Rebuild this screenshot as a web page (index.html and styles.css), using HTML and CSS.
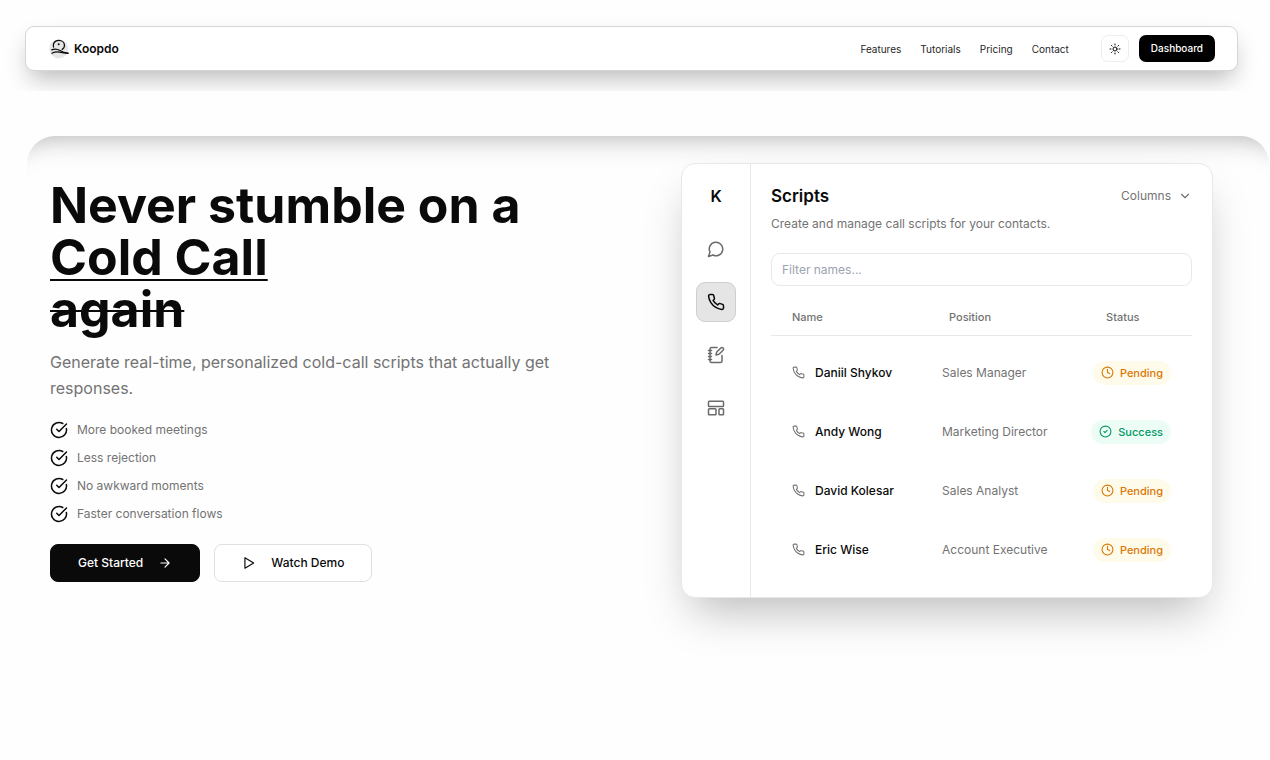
FILE: index.html
```html
<!DOCTYPE html>
<html lang="en">
<head>
<meta charset="utf-8">
<meta name="viewport" content="width=device-width, initial-scale=1">
<title>Koopdo</title>
<link rel="stylesheet" href="styles.css">
</head>
<body>
<svg class="sprite" aria-hidden="true">
  <symbol id="phone" viewBox="0 0 24 24"><path d="M22 16.920v3a2 2 0 0 1-2.180 2 19.790 19.790 0 0 1-8.630-3.070 19.500 19.500 0 0 1-6-6 19.790 19.790 0 0 1-3.070-8.670A2 2 0 0 1 4.110 2h3a2 2 0 0 1 2 1.720 12.840 12.840 0 0 0 .7 2.810 2 2 0 0 1-.45 2.110L8.090 9.910a16 16 0 0 0 6 6l1.270-1.270a2 2 0 0 1 2.110-.45 12.840 12.840 0 0 0 2.810.7A2 2 0 0 1 22 16.920z"/></symbol>
  <symbol id="check" viewBox="0 0 24 24"><path d="M21.801 10A10 10 0 1 1 17 3.335"/><path d="m9 11 3 3L22 4"/></symbol>
  <symbol id="clock" viewBox="0 0 24 24"><circle cx="12" cy="12" r="10"/><path d="M12 6v6l4 2"/></symbol>
  <symbol id="done" viewBox="0 0 24 24"><circle cx="12" cy="12" r="10"/><path d="m9 12 2 2 4-4"/></symbol>
</svg>

<header class="site-header">
  <nav class="navbar" aria-label="Main">
    <a class="brand" href="#">
      <svg class="brand-mark" viewBox="0 0 20 20" aria-hidden="true">
        <circle class="brand-disc" cx="9.700" cy="9.700" r="9.500"/>
        <path d="M4.500 8C3.400 4 6.200 1.400 9.700 1.400c3.500 0 5.800 2.300 5.800 5 0 1.700-.9 3.100-2.300 4"/>
        <path d="M2.700 10.800c3-1.300 5.600-.9 8.300.7 2.600 1.600 4.900 2.300 8 2.700"/>
        <path d="M3 14.200c2.800-1.500 5-1.700 7.600-1.100 2.200.5 5 1 8.400 1.300"/>
        <circle class="brand-eye" cx="9.700" cy="5.300" r="1"/>
      </svg>
      Koopdo
    </a>
    <div class="nav-links">
      <a href="#">Features</a>
      <a href="#">Tutorials</a>
      <a href="#">Pricing</a>
      <a href="#">Contact</a>
    </div>
    <button class="theme-toggle" type="button" aria-label="Toggle theme">
      <svg class="icon icon-12" viewBox="0 0 24 24"><circle cx="12" cy="12" r="4"/><path d="M12 2v2M12 20v2M4.930 4.930l1.410 1.410M17.660 17.660l1.410 1.410M2 12h2M20 12h2M6.340 17.660l-1.410 1.410M19.070 4.930l-1.410 1.410"/></svg>
    </button>
    <a class="dashboard" href="#">Dashboard</a>
  </nav>
</header>

<main class="hero">
  <section class="pitch">
    <h1>Never stumble on a<br><span class="underlined">Cold Call</span><br><s>again</s></h1>
    <p class="lead">Generate real-time, personalized cold-call scripts that actually get responses.</p>
    <ul class="benefits">
      <li><svg class="icon icon-18"><use href="#check"/></svg>More booked meetings</li>
      <li><svg class="icon icon-18"><use href="#check"/></svg>Less rejection</li>
      <li><svg class="icon icon-18"><use href="#check"/></svg>No awkward moments</li>
      <li><svg class="icon icon-18"><use href="#check"/></svg>Faster conversation flows</li>
    </ul>
    <div class="actions">
      <button class="btn btn-dark" type="button">Get Started
        <svg class="icon icon-14" viewBox="0 0 24 24"><path d="M5 12h14M12 5l7 7-7 7"/></svg>
      </button>
      <button class="btn btn-light" type="button">
        <svg class="icon icon-14" viewBox="0 0 24 24"><path d="M5 3l15 9-15 9z"/></svg>
        Watch Demo
      </button>
    </div>
  </section>

  <section class="app" aria-label="Scripts preview">
    <aside class="rail">
      <span class="rail-logo">K</span>
      <button class="rail-item" type="button" aria-label="Chat"><svg class="icon icon-18" viewBox="0 0 24 24"><path d="M7.900 20A9 9 0 1 0 4 16.100L2 22Z"/></svg></button>
      <button class="rail-item active" type="button" aria-label="Calls"><svg class="icon icon-18"><use href="#phone"/></svg></button>
      <button class="rail-item" type="button" aria-label="Notes"><svg class="icon icon-18" viewBox="0 0 24 24"><path d="M13.400 2H6a2 2 0 0 0-2 2v16a2 2 0 0 0 2 2h12a2 2 0 0 0 2-2v-7.400"/><path d="M2 6h4M2 10h4M2 14h4M2 18h4"/><path d="M21.378 5.626a1 1 0 1 0-3.004-3.004l-5.010 5.012a2 2 0 0 0-.506.854l-.837 2.870a.5.5 0 0 0 .62.620l2.870-.837a2 2 0 0 0 .854-.506z"/></svg></button>
      <button class="rail-item" type="button" aria-label="Templates"><svg class="icon icon-18" viewBox="0 0 24 24"><rect x="2" y="3" width="20" height="7" rx="1"/><rect x="2" y="13" width="10" height="8" rx="1"/><rect x="16" y="13" width="6" height="8" rx="1"/></svg></button>
    </aside>
    <div class="panel">
      <div class="panel-head">
        <h2>Scripts</h2>
        <button class="columns" type="button">Columns
          <svg class="icon icon-14" viewBox="0 0 24 24"><path d="m6 9 6 6 6-6"/></svg>
        </button>
      </div>
      <p class="panel-text">Create and manage call scripts for your contacts.</p>
      <input class="filter" type="text" placeholder="Filter names..." aria-label="Filter names">
      <table class="scripts">
        <thead>
          <tr><th class="col-wide" scope="col">Name</th><th class="col-wide" scope="col">Position</th><th scope="col">Status</th></tr>
        </thead>
        <tbody>
          <tr>
            <td><span class="person"><svg class="icon icon-13"><use href="#phone"/></svg>Daniil Shykov</span></td>
            <td>Sales Manager</td>
            <td><span class="badge pending"><svg class="icon icon-13"><use href="#clock"/></svg>Pending</span></td>
          </tr>
          <tr>
            <td><span class="person"><svg class="icon icon-13"><use href="#phone"/></svg>Andy Wong</span></td>
            <td>Marketing Director</td>
            <td><span class="badge success"><svg class="icon icon-13"><use href="#done"/></svg>Success</span></td>
          </tr>
          <tr>
            <td><span class="person"><svg class="icon icon-13"><use href="#phone"/></svg>David Kolesar</span></td>
            <td>Sales Analyst</td>
            <td><span class="badge pending"><svg class="icon icon-13"><use href="#clock"/></svg>Pending</span></td>
          </tr>
          <tr>
            <td><span class="person"><svg class="icon icon-13"><use href="#phone"/></svg>Eric Wise</span></td>
            <td>Account Executive</td>
            <td><span class="badge pending"><svg class="icon icon-13"><use href="#clock"/></svg>Pending</span></td>
          </tr>
        </tbody>
      </table>
    </div>
  </section>
</main>
</body>
</html>
```

FILE: styles.css
```css
*, *::before, *::after { box-sizing: border-box; }

body {
  margin: 0;
  background: #fefefe;
  color: #0a0a0a;
  font-family: Inter, "Liberation Sans", sans-serif;
  font-size: 12px;
  line-height: 20px;
}

h1, h2, p, ul { margin: 0; padding: 0; }
a { color: inherit; text-decoration: none; }
button, input { font: inherit; color: inherit; }
button { background: none; border: 0; padding: 0; cursor: pointer; }

.sprite { display: none; }

.icon {
  flex: none;
  fill: none;
  stroke: currentColor;
  stroke-width: 2;
  stroke-linecap: round;
  stroke-linejoin: round;
}
.icon-12 { width: 12px; height: 12px; }
.icon-13 { width: 13px; height: 13px; }
.icon-14 { width: 14px; height: 14px; }
.icon-18 { width: 18px; height: 18px; }

/* Header */
.site-header {
  padding: 26px 32px 20px 25px;
  overflow: hidden;
}
.navbar {
  display: flex;
  align-items: center;
  padding: 8px 22px 8px 23px;
  background: #fff;
  border: 1px solid #d6d6d6;
  border-radius: 9px;
  box-shadow: 0 12px 24px -5px rgba(0, 0, 0, .28);
}
.brand {
  display: flex;
  align-items: center;
  gap: 5px;
  margin-right: auto;
  font-weight: 600;
}
.brand-mark {
  width: 20px;
  height: 20px;
  fill: none;
  stroke: #0a0a0a;
  stroke-width: 1.3;
  stroke-linecap: round;
}
.brand-disc { fill: #e6e6e6; stroke: none; }
.brand-eye { fill: #0a0a0a; stroke: none; }
.nav-links {
  display: flex;
  gap: 19px;
  margin-right: 32px;
  color: #262626;
  font-size: 10px;
}
.theme-toggle {
  display: grid;
  place-items: center;
  width: 28px;
  height: 27px;
  margin-right: 10px;
  border: 1px solid #ededed;
  border-radius: 7px;
}
.dashboard {
  padding: 0 12px;
  border-radius: 7px;
  background: #000;
  color: #fff;
  font-size: 10px;
  font-weight: 500;
  line-height: 27px;
}

/* Hero */
.hero {
  display: grid;
  grid-template-columns: 1fr 1fr;
  align-items: center;
  gap: 99px;
  margin: 45px 1px 0 27px;
  padding: 27px 56px 60px 23px;
  border-radius: 28px 28px 0 0;
  box-shadow: inset 0 46px 28px -46px rgba(0, 0, 0, .34);
}

h1 {
  font-size: 50px;
  font-weight: 700;
  line-height: 52px;
}
.underlined {
  text-decoration: underline;
  text-decoration-thickness: 2px;
  text-underline-offset: 4px;
}
h1 s { text-decoration-thickness: 2px; }
.lead {
  margin-top: 14px;
  color: #737373;
  font-size: 16px;
  line-height: 26px;
}
.benefits {
  display: grid;
  gap: 8px;
  margin-top: 19px;
  list-style: none;
  color: #737373;
}
.benefits li { display: flex; align-items: center; gap: 9px; }
.benefits .icon { color: #0a0a0a; }

.actions { display: flex; gap: 14px; margin-top: 20px; }
.btn {
  display: flex;
  align-items: center;
  gap: 15px;
  height: 38px;
  padding: 0 27px;
  border: 1px solid #0a0a0a;
  border-radius: 8px;
  font-weight: 500;
}
.btn-dark { background: #0a0a0a; color: #fff; }
.btn-light { border-color: #e0e0e0; background: #fff; }

/* App preview */
.app {
  display: flex;
  border: 1px solid #e8e8e8;
  border-radius: 14px;
  background: #fff;
  box-shadow: 0 23px 46px -11px rgba(0, 0, 0, .27);
}
.rail {
  display: flex;
  flex-direction: column;
  align-items: center;
  gap: 13px;
  width: 69px;
  padding-top: 12px;
  border-right: 1px solid #e8e8e8;
}
.rail-logo {
  font-size: 16px;
  font-weight: 600;
  line-height: 40px;
}
.rail-item {
  display: grid;
  place-items: center;
  width: 40px;
  height: 40px;
  border: 1px solid transparent;
  border-radius: 9px;
  color: #6b6b6b;
}
.rail-item.active {
  border-color: #cfcfcf;
  background: #e5e5e5;
  color: #0a0a0a;
}
.panel {
  flex: 1;
  min-width: 0;
  padding: 19px 20px 18px;
}
.panel-head { display: flex; align-items: center; justify-content: space-between; }
h2 { font-size: 17px; font-weight: 600; line-height: 26px; }
.columns { display: flex; align-items: center; gap: 7px; color: #737373; }
.panel-text { margin-top: 5px; color: #737373; }
.filter {
  display: block;
  width: 100%;
  height: 33px;
  margin-top: 19px;
  padding: 0 10px;
  border: 1px solid #e8e8e8;
  border-radius: 9px;
  background: #fff;
}
.filter::placeholder { color: #9ca3af; opacity: 1; }

.scripts {
  width: 100%;
  margin-top: 13px;
  border-collapse: collapse;
  table-layout: fixed;
}
.scripts th {
  height: 36px;
  padding: 0 0 0 21px;
  border-bottom: 1px solid #e8e8e8;
  color: #737373;
  font-size: 11px;
  font-weight: 500;
  text-align: left;
}
.col-wide { width: 37.3%; }
.scripts td {
  height: 59px;
  padding: 0 0 0 14px;
  color: #737373;
  white-space: nowrap;
}
.scripts td:first-child { padding-left: 21px; }
.scripts td:last-child { padding: 0 21px 0 0; text-align: right; }
.scripts tbody tr:first-child td { height: 67px; padding-top: 8px; }
.person {
  display: flex;
  align-items: center;
  gap: 10px;
  color: #0a0a0a;
  font-weight: 500;
}
.person .icon { color: #737373; }
.badge {
  display: inline-flex;
  align-items: center;
  gap: 6px;
  padding: 0 8px;
  border-radius: 12px;
  font-size: 11px;
  font-weight: 500;
  line-height: 24px;
  vertical-align: middle;
}
.pending { background: #fffbeb; color: #d97706; }
.success { background: #ecfdf5; color: #059669; }
```
